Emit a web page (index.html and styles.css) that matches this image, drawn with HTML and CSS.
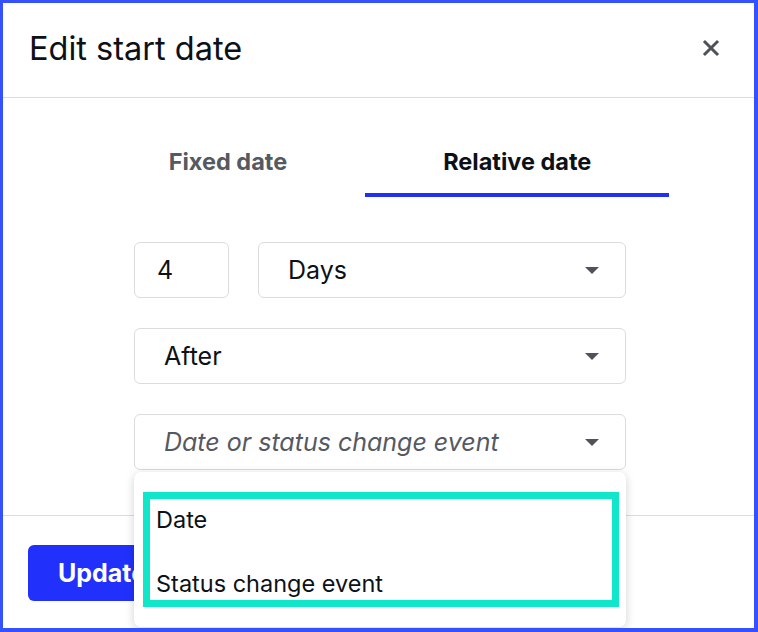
FILE: index.html
```html
<!DOCTYPE html>
<html lang="en">
<head>
    <meta charset="UTF-8">
    <meta name="viewport" content="width=device-width, initial-scale=1.0">
    <title>Edit start date</title>
    <link rel="stylesheet" href="styles.css">
</head>
<body>
    <div class="modal">
        <!-- Cabeçalho do modal -->
        <div class="modal-header">
            <h1>Edit start date</h1>
            <button class="close-btn" aria-label="Close">
                <svg width="18" height="18" viewBox="0 0 18 18">
                    <path d="M3 3 L15 15 M15 3 L3 15" stroke="#4f5259" stroke-width="3" stroke-linecap="square"/>
                </svg>
            </button>
        </div>

        <div class="modal-body">
            <!-- Abas -->
            <div class="tabs">
                <div class="tab">Fixed date</div>
                <div class="tab active">Relative date</div>
            </div>

            <div class="form">
                <div class="row">
                    <div class="field number">4</div>
                    <div class="field select grow">Days<span class="arrow"></span></div>
                </div>
                <div class="field select">After<span class="arrow"></span></div>
                <div class="select-wrap">
                    <div class="field select placeholder">Date or status change event<span class="arrow"></span></div>
                    <!-- Menu suspenso aberto -->
                    <div class="menu">
                        <div class="menu-item">Date</div>
                        <div class="menu-item">Status change event</div>
                        <div class="highlight"></div>
                    </div>
                </div>
            </div>
        </div>

        <div class="modal-footer">
            <button class="update-btn">Update</button>
        </div>
    </div>
</body>
</html>
```

FILE: styles.css
```css
* {
    box-sizing: border-box;
}
body {
    margin: 0;
    font-family: Inter, "Liberation Sans", sans-serif;
    color: #0d1117;
    background: #fff;
}
.modal {
    height: 632px;
    border-style: solid;
    border-color: #3451fd;
    border-width: 3px 4px 4px 3px;
    background: #fff;
    display: flex;
    flex-direction: column;
    overflow: hidden;
}
.modal-header {
    flex-shrink: 0;
    height: 95px;
    border-bottom: 1px solid #dcdcdc;
    display: flex;
    align-items: center;
    justify-content: space-between;
    padding: 0 34px 4px 26px;
}
.modal-header h1 {
    margin: 0;
    font-size: 32.5px;
    font-weight: 400;
}
.close-btn {
    border: none;
    background: none;
    padding: 0;
    width: 18px;
    height: 18px;
    cursor: pointer;
}
.modal-body {
    flex-shrink: 0;
    height: 418px;
    border-bottom: 1px solid #dcdcdc;
    padding-top: 40px;
}
.tabs {
    display: flex;
    justify-content: center;
    padding-left: 3px;
}
.tab {
    padding: 12px 78px 19px;
    font-size: 23.5px;
    font-weight: 700;
    line-height: 24px;
    color: #555962;
    border-bottom: 4px solid transparent;
}
.tab.active {
    color: #0d1117;
    border-bottom-color: #2031f5;
}
.form {
    width: 492px;
    margin: 45px 0 0 131px;
    display: flex;
    flex-direction: column;
    gap: 30px;
}
.row {
    display: flex;
    gap: 29px;
}
.field {
    height: 56px;
    border: 1px solid #dcdcdc;
    border-radius: 6px;
    display: flex;
    align-items: center;
    padding-left: 29px;
    font-size: 25px;
    position: relative;
}
.field.number {
    width: 95px;
    padding-left: 22px;
}
.grow {
    flex: 1;
}
.placeholder {
    font-style: italic;
    color: #555962;
}
.arrow {
    position: absolute;
    right: 26px;
    top: 24px;
    border-left: 7px solid transparent;
    border-right: 7px solid transparent;
    border-top: 7px solid #4f5259;
}
.select-wrap {
    position: relative;
}
.menu {
    position: absolute;
    top: 58px;
    left: 0;
    width: 492px;
    background: #fff;
    border-radius: 7px;
    box-shadow: 0 2px 10px rgba(0, 0, 0, 0.18);
    padding: 15px 0 12px;
    z-index: 5;
}
.menu-item {
    height: 64px;
    display: flex;
    align-items: center;
    padding-left: 22px;
    font-size: 23.5px;
}
.highlight {
    position: absolute;
    left: 9px;
    top: 20px;
    width: 476px;
    height: 115px;
    border: 7px solid #10e6c9;
}
.modal-footer {
    flex: 1;
    padding: 29px 25px 0;
}
.update-btn {
    height: 56px;
    padding: 0 30px;
    border: none;
    border-radius: 6px;
    background: #2131fb;
    color: #fff;
    font-family: Inter, "Liberation Sans", sans-serif;
    font-size: 25px;
    font-weight: 700;
    cursor: pointer;
}
```
